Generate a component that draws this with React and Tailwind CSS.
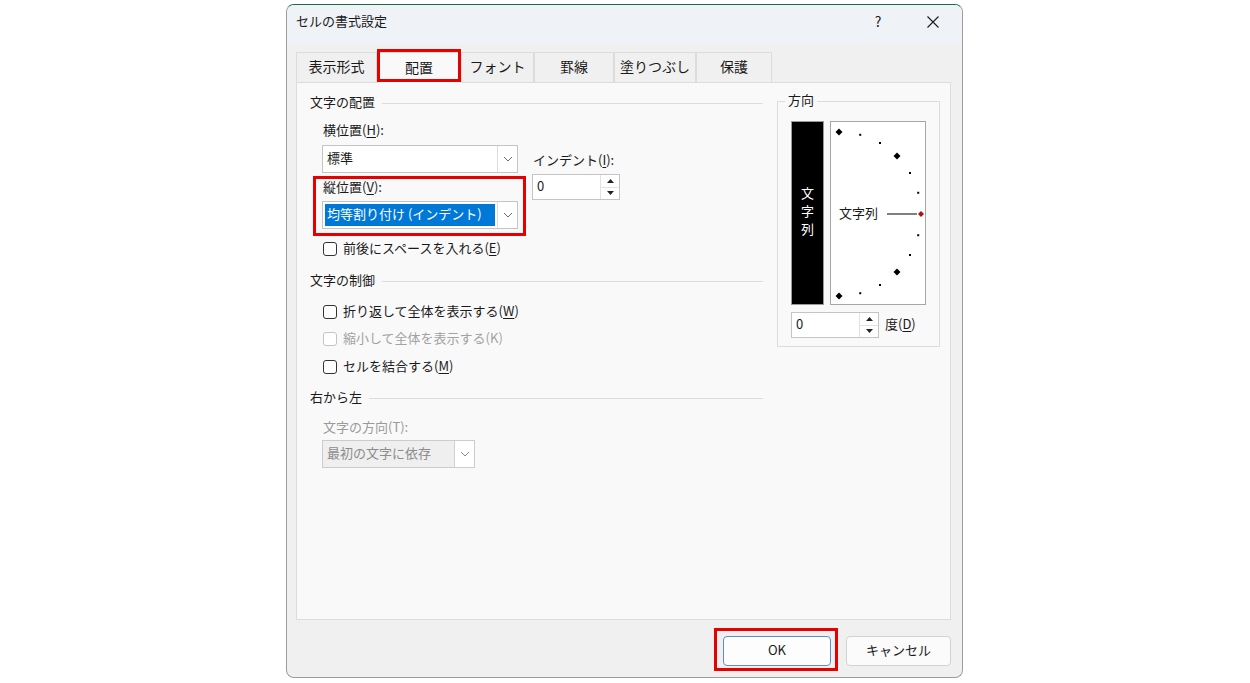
import React from "react";

const FONT = { fontFamily: '"Noto Sans CJK JP", "Noto Sans", sans-serif' };

function Chevron({ color = "#6b6b6b" }) {
  return (
    <svg width="10" height="6" viewBox="0 0 10 6">
      <path d="M1 1 L5 5 L9 1" fill="none" stroke={color} strokeWidth="1" />
    </svg>
  );
}

function DropBtn({ disabled }) {
  return (
    <div className={"flex w-[20px] items-center justify-center border-l " + (disabled ? "border-[#d0d0d0] bg-white" : "border-[#dedede] bg-white")}>
      <Chevron color={disabled ? "#8a8a8a" : "#6b6b6b"} />
    </div>
  );
}

function Spin() {
  return (
    <div className="flex w-[19px] flex-col border-l border-[#e2e2e2]">
      <div className="flex flex-1 items-center justify-center border-b border-[#e2e2e2]">
        <svg width="7" height="4" viewBox="0 0 7 4"><path d="M0 4 L3.5 0 L7 4 Z" fill="#222" /></svg>
      </div>
      <div className="flex flex-1 items-center justify-center">
        <svg width="7" height="4" viewBox="0 0 7 4"><path d="M0 0 L3.5 4 L7 0 Z" fill="#222" /></svg>
      </div>
    </div>
  );
}

function CheckBox({ children, disabled }) {
  return (
    <div className="flex h-[18px] items-center gap-[6px]">
      <div className={"h-[14px] w-[14px] rounded-[3px] border bg-white " + (disabled ? "border-[#c4c4c4]" : "border-[#333]")} />
      <span className={"-mt-[2px] " + (disabled ? "text-[#a2a2a2]" : "text-[#1a1a1a]")}>{children}</span>
    </div>
  );
}

function GroupHeader({ children }) {
  return (
    <div className="flex h-[18px] items-center">
      <span className="-mt-[2px] pr-[7px] text-[#1a1a1a]">{children}</span>
      <div className="h-0 flex-1 border-t border-[#dcdcdc]" />
    </div>
  );
}

function U({ children }) {
  return <span className="underline underline-offset-2">{children}</span>;
}

function Tab({ children, w, selected }) {
  return (
    <div
      className={
        "relative flex items-center justify-center border border-b-0 pb-[3px] text-[14px] text-[#1a1a1a] " +
        w +
        (selected ? " z-10 -mb-px h-[31px] border-[#dcdcdc] bg-[#f9f9f9]" : " h-[30px] border-[#dcdcdc] bg-[#f0f0f0]")
      }
    >
      {children}
      {selected && (
        <div className="pointer-events-none absolute -top-[4px] -left-[1px] -right-[1px] h-[33px] border-[3px] border-[#e60000]" />
      )}
    </div>
  );
}

function Dial() {
  const pts = [];
  for (let a = 90; a >= -90; a -= 15) {
    const r = (a * Math.PI) / 180;
    pts.push({ a, x: 9 + 82 * Math.cos(r), y: 93 - 82 * Math.sin(r) });
  }
  return (
    <svg width="94" height="182" viewBox="1 1 94 182" className="block">
      {pts.map((p) => {
        if (p.a === 0) {
          return <path key={p.a} d={`M${p.x - 3} ${p.y} L${p.x} ${p.y - 3} L${p.x + 3} ${p.y} L${p.x} ${p.y + 3} Z`} fill="#b01010" />;
        }
        if (Math.abs(p.a) === 90 || Math.abs(p.a) === 45) {
          return <path key={p.a} d={`M${p.x - 3.5} ${p.y} L${p.x} ${p.y - 3.5} L${p.x + 3.5} ${p.y} L${p.x} ${p.y + 3.5} Z`} fill="#000" />;
        }
        return <rect key={p.a} x={p.x - 1} y={p.y - 1} width="2" height="2" fill="#000" />;
      })}
      <line x1="57" y1="93" x2="87" y2="93" stroke="#000" strokeWidth="1" />
    </svg>
  );
}

export default function App() {
  return (
    <div className="min-h-[683px] w-[1250px] bg-white pt-[4px] pl-[286px] text-[13px] leading-[18px]" style={FONT}>
      <div className="flex h-[674px] w-[677px] flex-col overflow-hidden rounded-[8px] border border-[#9c9c9c] border-t-[#1d6a43] bg-[#f0f0f0]">
        {/* Title bar */}
        <div className="flex h-[39px] shrink-0 items-center bg-[#eff3f8] pb-[7px] pl-[9px]">
          <span className="flex-1 text-[13px] text-[#1a1a1a]">セルの書式設定</span>
          <span className="w-[56px] text-center text-[14px] text-[#1a1a1a]">?</span>
          <div className="flex w-[56px] items-center justify-center pr-[2px] pt-[2px]">
            <svg width="12" height="12" viewBox="0 0 12 12">
              <path d="M0.5 0.5 L11.5 11.5 M11.5 0.5 L0.5 11.5" stroke="#1a1a1a" strokeWidth="1.1" />
            </svg>
          </div>
        </div>

        {/* Tabs */}
        <div className="mt-[8px] flex items-start pl-[9px]">
          <Tab w="w-[81px]">表示形式</Tab>
          <Tab w="w-[84px]" selected>配置</Tab>
          <Tab w="w-[73px]">フォント</Tab>
          <Tab w="w-[80px]">罫線</Tab>
          <Tab w="w-[82px]">塗りつぶし</Tab>
          <Tab w="w-[76px]">保護</Tab>
        </div>

        {/* Panel */}
        <div className="ml-[9px] flex h-[538px] w-[655px] border border-[#dcdcdc] bg-[#f9f9f9] pl-[13px] pt-[11px]">
          {/* Left column */}
          <div className="flex w-[453px] flex-col">
            <GroupHeader>文字の配置</GroupHeader>
            <div className="flex pl-[12px] pt-[10px]">
              <div className="flex w-[196px] flex-col">
                <div className="-mt-[1px] h-[19px] pl-[1px] text-[#1a1a1a]">
                  横位置(<U>H</U>):
                </div>
                <div className="mt-[5px] flex h-[28px] border border-[#c4c4c4] bg-white">
                  <div className="flex flex-1 items-center pb-[2px] pl-[4px] text-[#1a1a1a]">標準</div>
                  <DropBtn />
                </div>
                <div className="relative mt-[6px] flex flex-col">
                  <div className="-mt-[1px] h-[19px] pl-[1px] text-[#1a1a1a]">
                    縦位置(<U>V</U>):
                  </div>
                  <div className="mt-[4px] flex h-[28px] border border-[#c4c4c4] bg-white">
                    <div className="flex flex-1 items-center p-[2px]">
                      <div className="flex h-full w-full items-center bg-[#0078d7] pb-[2px] pl-[2px] text-white">均等割り付け (インデント)</div>
                    </div>
                    <DropBtn />
                  </div>
                  <div className="pointer-events-none absolute -top-[3px] -left-[9px] -right-[8px] -bottom-[7px] border-[3px] border-[#e60000]" />
                </div>
              </div>
              <div className="ml-[14px] flex flex-col pt-[29px]">
                <div className="h-[19px] pl-[1px] text-[#1a1a1a]">
                  インデント(<U>I</U>):
                </div>
                <div className="mt-[4px] flex h-[26px] w-[88px] border border-[#c4c4c4] bg-white">
                  <div className="flex flex-1 items-center pb-[2px] pl-[4px] text-[#1a1a1a]">0</div>
                  <Spin />
                </div>
              </div>
            </div>
            <div className="mt-[11px] pl-[13px]">
              <CheckBox>
                前後にスペースを入れる(<U>E</U>)
              </CheckBox>
            </div>

            <div className="mt-[14px]">
              <GroupHeader>文字の制御</GroupHeader>
            </div>
            <div className="flex flex-col gap-[9px] pl-[13px] pt-[13px]">
              <CheckBox>
                折り返して全体を表示する(<U>W</U>)
              </CheckBox>
              <CheckBox disabled>縮小して全体を表示する(K)</CheckBox>
              <div className="mt-[1px]">
                <CheckBox>
                  セルを結合する(<U>M</U>)
                </CheckBox>
              </div>
            </div>

            <div className="mt-[13px]">
              <GroupHeader>右から左</GroupHeader>
            </div>
            <div className="flex flex-col pl-[12px] pt-[12px]">
              <div className="-mt-[1px] h-[19px] pl-[1px] text-[#9a9a9a]">文字の方向(T):</div>
              <div className="mt-[3px] flex h-[28px] w-[153px] border border-[#cccccc] bg-[#efefef]">
                <div className="flex flex-1 items-center pb-[2px] pl-[4px] text-[#8c8c8c]">最初の文字に依存</div>
                <DropBtn disabled />
              </div>
            </div>
          </div>

          {/* Right column: 方向 */}
          <div className="ml-[14px] mt-[7px] h-[246px] w-[163px]">
            <div className="relative flex h-full flex-col border border-[#dcdcdc] pl-[13px] pt-[19px]">
              <div className="absolute -top-[11px] left-[7px] bg-[#f9f9f9] px-[3px] text-[#1a1a1a]">方向</div>
              <div className="flex gap-[6px]">
                <div className="flex h-[184px] w-[33px] flex-col items-center justify-center border border-[#9a9a9a] bg-black pb-[4px] text-[13px] leading-[18px] text-white">
                  <span>文</span>
                  <span>字</span>
                  <span>列</span>
                </div>
                <div className="relative h-[184px] w-[96px] border border-[#a6a6a6] bg-white">
                  <Dial />
                  <div className="absolute left-[8px] top-[82px] text-[13px] leading-[18px] text-[#1a1a1a]">文字列</div>
                </div>
              </div>
              <div className="mt-[7px] flex items-center">
                <div className="flex h-[26px] w-[88px] border border-[#c4c4c4] bg-white">
                  <div className="flex flex-1 items-center pb-[2px] pl-[4px] text-[#1a1a1a]">0</div>
                  <Spin />
                </div>
                <span className="-mt-[2px] ml-[6px] text-[#1a1a1a]">
                  度(<U>D</U>)
                </span>
              </div>
            </div>
          </div>
        </div>

        {/* Footer */}
        <div className="mt-[16px] flex justify-end gap-[15px] pr-[11px]">
          <div className="relative">
            <div className="flex h-[30px] w-[108px] items-center justify-center rounded-[4px] border border-[#5e8ec4] bg-[#fdfdfd] pb-[2px] text-[#1a1a1a]">
              OK
            </div>
            <div className="pointer-events-none absolute -top-[8px] -left-[9px] -right-[7px] -bottom-[5px] border-[3px] border-[#e60000]" />
          </div>
          <div className="flex h-[30px] w-[105px] items-center justify-center rounded-[4px] border border-[#d2d2d2] bg-[#fbfbfb] pb-[2px] text-[#1a1a1a]">
            キャンセル
          </div>
        </div>
      </div>
    </div>
  );
}
